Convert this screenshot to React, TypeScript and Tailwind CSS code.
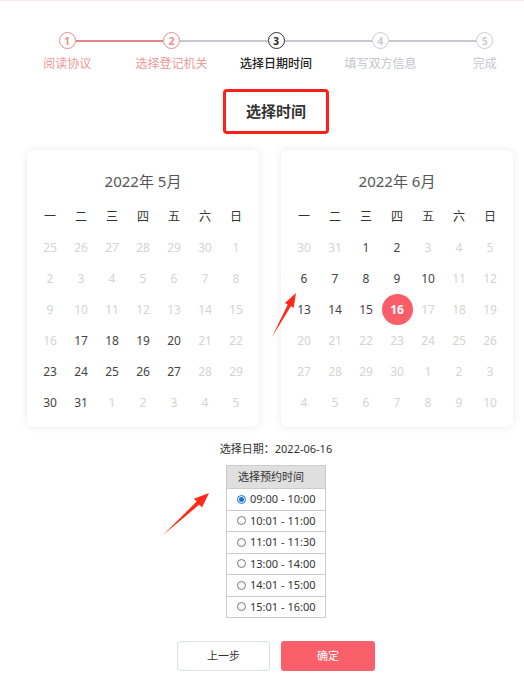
import type { ReactNode } from "react";

type StepState = "done" | "current" | "todo";

const steps: { n: number; label: string; state: StepState; left: string; right: string }[] = [
	{ n: 1, label: "阅读协议", state: "done", left: "bg-transparent", right: "bg-[#e68585]" },
	{ n: 2, label: "选择登记机关", state: "done", left: "bg-[#e68585]", right: "bg-[#c6c8d0]" },
	{ n: 3, label: "选择日期时间", state: "current", left: "bg-[#c6c8d0]", right: "bg-[#c6c8d0]" },
	{ n: 4, label: "填写双方信息", state: "todo", left: "bg-[#c6c8d0]", right: "bg-[#c6c8d0]" },
	{ n: 5, label: "完成", state: "todo", left: "bg-[#c6c8d0]", right: "bg-transparent" },
];

const circleStyle: Record<StepState, string> = {
	done: "border-[#e88c8c] text-[#e88c8c]",
	current: "border-[#333] text-[#222]",
	todo: "border-[#c9cbd2] text-[#c9cbd2]",
};

const labelStyle: Record<StepState, string> = {
	done: "text-[#ec9898]",
	current: "text-[#222] font-medium",
	todo: "text-[#c3c5cc]",
};

const weekdays = ["一", "二", "三", "四", "五", "六", "日"];

type Cell = { d: number; on: boolean; sel: boolean };

function buildMonth(before: number[], count: number, after: number, active: number[], selected?: number): Cell[] {
	const cells: Cell[] = before.map((d) => ({ d, on: false, sel: false }));
	for (let d = 1; d <= count; d++) {
		cells.push({ d, on: active.includes(d), sel: d === selected });
	}
	for (let d = 1; d <= after; d++) cells.push({ d, on: false, sel: false });
	return cells;
}

const may = buildMonth([25, 26, 27, 28, 29, 30], 31, 5, [17, 18, 19, 20, 23, 24, 25, 26, 27, 30, 31]);
const june = buildMonth([30, 31], 30, 10, [1, 2, 6, 7, 8, 9, 10, 13, 14, 15], 16);

const slots = ["09:00 - 10:00", "10:01 - 11:00", "11:01 - 11:30", "13:00 - 14:00", "14:01 - 15:00", "15:01 - 16:00"];

function Calendar({ title, cells }: { title: string; cells: Cell[] }) {
	return (
		<div className="w-[232px] rounded-[6px] bg-white px-[7.5px] pt-[21px] pb-[9px] shadow-[0_0_8px_rgba(0,0,0,0.09)]">
			<div className="h-[20px] text-center text-[15px] leading-[20px] text-[#555]">{title}</div>
			<div className="mt-[10px] grid grid-cols-7">
				{weekdays.map((w) => (
					<div key={w} className="flex h-[31px] items-center justify-center text-[12px] text-[#333]">
						{w}
					</div>
				))}
				{cells.map((c, i) => (
					<div key={i} className="flex h-[31px] items-center justify-center text-[12px]">
						{c.sel ? (
							<span className="flex h-[31px] w-[31px] items-center justify-center rounded-full bg-[#f95d68] font-bold text-white">
								{c.d}
							</span>
						) : (
							<span className={c.on ? "text-[#444]" : "text-[#d4d4d4]"}>{c.d}</span>
						)}
					</div>
				))}
			</div>
		</div>
	);
}

function Row({ children, head }: { children: ReactNode; head?: boolean }) {
	return (
		<div
			className={
				head
					? "flex h-[22px] items-center bg-[#dfdfdf] pl-[11px] text-[11px] text-[#333]"
					: "flex h-[21.5px] items-center border-t border-[#cccccc] pl-[10px] text-[11px] text-[#333]"
			}
		>
			{children}
		</div>
	);
}

export default function App() {
	return (
		<div className="relative h-[693px] w-[524px] overflow-hidden border-t border-[#fde6ea] bg-white font-['Noto_Sans','Noto_Sans_CJK_SC',sans-serif]">
			<div className="flex w-[552px] flex-col items-center">
				{/* Steps */}
				<div className="mt-[31px] grid w-[522px] grid-cols-5">
					{steps.map((s) => (
						<div key={s.n} className="flex flex-col items-center">
							<div className="flex w-full items-center">
								<div className={`h-[2px] flex-1 ${s.left}`} />
								<div
									className={`flex h-[17px] w-[17px] items-center justify-center rounded-full border-[1.5px] text-[10px] leading-none font-bold ${circleStyle[s.state]}`}
								>
									{s.n}
								</div>
								<div className={`h-[2px] flex-1 ${s.right}`} />
							</div>
							<div className={`mt-[6px] text-[12px] leading-[17px] ${labelStyle[s.state]}`}>{s.label}</div>
						</div>
					))}
				</div>

				{/* Title */}
				<div className="mt-[17px] flex h-[45px] w-[106px] items-center justify-center rounded-[4px] border-[3px] border-[#ff1f1a] text-[15px] font-bold text-[#333]">
					选择时间
				</div>

				{/* Calendars */}
				<div className="mt-[16px] flex gap-[22px] self-start pl-[27px]">
					<Calendar title="2022年 5月" cells={may} />
					<Calendar title="2022年 6月" cells={june} />
				</div>

				<div className="mt-[13px] text-[11px] leading-[17px] text-[#333]">选择日期：2022-06-16</div>

				{/* Time slots */}
				<div className="mt-[8px] w-[100px] border border-[#cccccc]">
					<Row head>选择预约时间</Row>
					{slots.map((t, i) => (
						<Row key={t}>
							{i === 0 ? (
								<span className="mr-[4px] flex h-[9px] w-[9px] items-center justify-center rounded-full border border-[#1a6fd8]">
									<span className="h-[5px] w-[5px] rounded-full bg-[#1a6fd8]" />
								</span>
							) : (
								<span className="mr-[4px] h-[9px] w-[9px] rounded-full border border-[#777]" />
							)}
							{t}
						</Row>
					))}
				</div>

				{/* Buttons */}
				<div className="mt-[23px] flex gap-[11px]">
					<button className="h-[30px] w-[93px] rounded-[3px] border border-[#dcdfe6] bg-white text-[11px] text-[#333]">
						上一步
					</button>
					<button className="h-[30px] w-[94px] rounded-[3px] bg-[#fa5f6a] text-[11px] text-white">确定</button>
				</div>
			</div>

			{/* Annotation arrows */}
			<svg className="pointer-events-none absolute inset-0" width="524" height="693" viewBox="0 0 524 693">
				<polygon
					points="272,336 290.9,305.2 293.7,306.7 296,292 284.9,301.9 287.7,303.4"
					fill="#ff2a1a"
				/>
				<polygon
					points="163,534 199.3,503.6 202,506.5 209,492 193.9,497.7 196.6,500.6"
					fill="#ff2a1a"
				/>
			</svg>
		</div>
	);
}
